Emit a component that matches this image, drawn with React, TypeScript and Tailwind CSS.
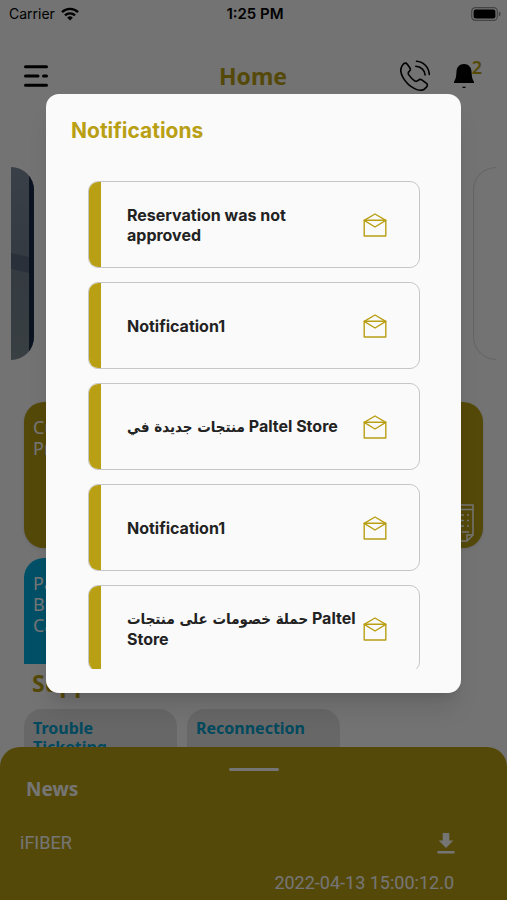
import React from 'react';

interface NotificationItem {
  id: number;
  title: string;
}

const NOTIFICATIONS: NotificationItem[] = [
  { id: 1, title: 'Reservation was not approved' },
  { id: 2, title: 'Notification1' },
  { id: 3, title: 'منتجات جديدة في Paltel Store' },
  { id: 4, title: 'Notification1' },
  { id: 5, title: 'حملة خصومات على منتجات Paltel Store' },
];

const SUPPORT_LINKS = ['Trouble Ticketing', 'Reconnection'];

const WifiIcon = () => (
  <svg viewBox="0 0 18 14" className="w-[18px] h-[14px]" fill="none" stroke="currentColor" strokeWidth="2.4">
    <path d="M1 5.2a11.4 11.4 0 0 1 16 0" />
    <path d="M4 8.4a7.1 7.1 0 0 1 10 0" />
    <path d="M9 13.6l-2.8-2.9a4 4 0 0 1 5.6 0z" fill="currentColor" stroke="none" />
  </svg>
);

const BatteryIcon = () => (
  <svg viewBox="0 0 30 14" className="w-[30px] h-[14px]">
    <rect x="0.7" y="0.7" width="25.6" height="12.6" rx="3.6" fill="none" stroke="#000" strokeOpacity="0.4" strokeWidth="1.2" />
    <rect x="2.6" y="2.6" width="21.8" height="8.8" rx="2" fill="#000" />
    <path d="M27.8 4.6c1.1.3 1.8 1.2 1.8 2.4s-.7 2.1-1.8 2.4z" fill="#000" fillOpacity="0.4" />
  </svg>
);

const MenuIcon = () => (
  <svg viewBox="0 0 24 24" className="size-6" stroke="currentColor" strokeWidth="3" strokeLinecap="round">
    <path d="M1.5 2.7h21M1.5 12h12.500M19.5 12h3M1.5 21.3h21" />
  </svg>
);

const PhoneIcon = () => (
  <svg viewBox="0 0 31 32" className="w-[31px] h-8" fill="none" stroke="currentColor" strokeWidth="1.600" strokeLinecap="round" strokeLinejoin="round">
    <path d="M3.200 4.200C4.600 2.700 6.200 2.800 7.300 4.200l2.500 3.500c.9 1.300.7 2.500-.4 3.500-1.500 1.300-1.700 2.100-.6 3.700 1.600 2.300 3.500 4.300 5.800 5.900 1.500 1.100 2.400.9 3.700-.5 1-1.100 2.200-1.300 3.500-.4l4.400 3.200c1.400 1 1.500 2.500.4 3.800-3.200 4.200-7.500 4-12 1.700C9.700 26.200 5.500 21.800 2.900 17.300.4 12.800-.1 7.700 3.200 4.200z" />
    <path d="M16.500 1.300c7 .4 12.300 5.900 12.800 13.200" />
    <path d="M15.800 6.300c5.100.3 8.900 3.800 9.300 8.600" />
  </svg>
);

const BellIcon = () => (
  <svg viewBox="0 0 22 26" className="w-[22px] h-[26px]" fill="currentColor">
    <path d="M11 1c-4.600 0-7.200 3.300-7.500 7.600-.3 5-.7 7.200-1.800 9-.4.700-.7 1.300-.9 2.400h20.400c-.2-1.100-.5-1.700-.9-2.400-1.100-1.800-1.500-4-1.800-9C18.200 4.300 15.600 1 11 1z" />
    <path d="M9 23.800h4c-.3.800-1 1.300-2 1.300s-1.700-.5-2-1.300z" />
  </svg>
);

const EnvelopeIcon = () => (
  <svg viewBox="0 0 24 24" className="size-6 shrink-0" fill="none" stroke="#b99f14" strokeWidth="1.4" strokeLinejoin="round">
    <path d="M1.200 7.300h21.600V23H1.200z" />
    <path d="M1.200 7.300L12 1l10.800 6.300L12 14z" />
  </svg>
);

const ReceiptIcon = () => (
  <svg viewBox="0 0 30 38" className="w-[30px] h-[38px]" fill="none" stroke="currentColor" strokeWidth="1.5">
    <path d="M1 1h28v30l-6 6H1z" />
    <path d="M1 5.500h28M23 37v-6h6M18 28h7" />
    <path d="M5 11h20M5 16.500h20M5 22h20" strokeDasharray="3 3" />
  </svg>
);

const DownloadIcon = () => (
  <svg viewBox="0 0 18 22" className="w-[18px] h-[22px]" fill="currentColor">
    <path d="M5.700 1h6.600v7.500h4L9 16 1.700 8.500h4z" />
    <path d="M.5 19h17v2.500H.5z" />
  </svg>
);

// Arabic runs get their own face, everything else stays in Inter
const MixedText: React.FC<{ text: string }> = ({ text }) => {
  const arabic = text.match(/^[\u0600-\u06ff\s]+(?=\s)/)?.[0] ?? '';
  return (
    <>
      {arabic && (
        <span lang="ar" className="text-[15px] font-['DejaVu_Sans_Condensed','DejaVu_Sans',sans-serif]">
          {arabic}
        </span>
      )}
      {text.slice(arabic.length)}
    </>
  );
};

const NotificationCard: React.FC<{ item: NotificationItem }> = ({ item }) => (
  <li>
    <button
      type="button"
      className="flex w-full h-[87px] items-center rounded-[10px] border border-[#c6c6c6] overflow-hidden text-left"
    >
      <span className="w-3 self-stretch bg-[#b99f14]"></span>
      <span dir="ltr" className="flex-1 pl-[26px] pr-0.5 text-base leading-5 font-bold text-[#222]">
        <MixedText text={item.title} />
      </span>
      <span className="w-14">
        <EnvelopeIcon />
      </span>
    </button>
  </li>
);

const App: React.FC = () => {
  return (
    <div className="relative h-screen min-h-[700px] w-full overflow-hidden bg-[#fafafa] font-['Noto_Sans',sans-serif]">
      {/* Status bar */}
      <div className="grid grid-cols-3 items-center h-7 pl-[9px] pr-[6px] font-['Inter',sans-serif] text-sm text-black">
        <div className="flex items-center gap-[6px]">
          <span>Carrier</span>
          <WifiIcon />
        </div>
        <span className="text-center text-[15px] font-semibold">1:25 PM</span>
        <div className="flex justify-end">
          <BatteryIcon />
        </div>
      </div>

      {/* App bar */}
      <header className="grid grid-cols-3 items-center mt-6 h-12 pl-6 pr-[25px] text-black">
        <button type="button" aria-label="Menu" className="justify-self-start">
          <MenuIcon />
        </button>
        <h1 className="text-center text-[23px] leading-8 font-bold text-[#b99f14]">Home</h1>
        <div className="flex items-center justify-end gap-[22px]">
          <button type="button" aria-label="Call">
            <PhoneIcon />
          </button>
          <button type="button" aria-label="Alerts" className="relative pr-[7px]">
            <BellIcon />
            <span className="absolute -top-2 right-0 text-lg leading-6 font-semibold text-[#b99f14]">2</span>
          </button>
        </div>
      </header>

      {/* Banner carousel, only the edges of the neighbours show */}
      <div className="flex justify-between mt-[67px] h-[193px] px-[11px]">
        <div className="flex w-[23px] rounded-r-[23px] overflow-hidden bg-linear-to-b from-[#7d8b9c] via-[#71808f] to-[#7c8a90]">
          <div className="flex-1 pt-[88px]">
            <div className="h-4 bg-[#5d6a7c] skew-y-12"></div>
          </div>
          <div className="w-[5px] bg-[#1b2c48]"></div>
        </div>
        <div className="w-[23px] rounded-l-[23px] border border-r-0 border-[#dcdcdc]"></div>
      </div>

      {/* Product cards */}
      <div className="mt-[42px] px-6">
        <div className="flex items-end justify-between h-[146px] rounded-[20px] bg-[#b99f14] px-[9px] pt-[15px] pb-[6px] text-lg leading-[21px] text-white shadow">
          <span className="self-start">
            Current
            <br />
            Products
          </span>
          <ReceiptIcon />
        </div>
        <div className="mt-[10px] w-1/2 h-[106px] rounded-t-[20px] bg-[#00aee0] px-[9px] pt-[15px] text-lg leading-[21px] text-white">
          Paltel
          <br />
          Broadband
          <br />
          Calculator
        </div>
      </div>

      {/* Support */}
      <h2 className="mt-[3px] pl-8 text-[23px] leading-8 font-bold text-[#b99f14]">Support</h2>
      <div className="flex gap-[10px] mt-[10px] px-6">
        {SUPPORT_LINKS.map((label) => (
          <a
            key={label}
            href="#support"
            className="w-1/3 h-20 rounded-[18px] bg-[#e0e0e0] px-[9px] pt-[10px] text-base leading-[19px] font-bold text-[#009fcd]"
          >
            {label}
          </a>
        ))}
      </div>

      {/* News sheet */}
      <section className="absolute inset-x-0 bottom-0 h-[153px] rounded-t-[20px] bg-[#b99f14] pt-[21px] font-['Roboto',sans-serif] text-white">
        <div className="mx-auto w-[50px] h-[3px] rounded-full bg-white"></div>
        <h2 className="mt-1 pl-[26px] text-[19px] leading-7 font-bold font-['Noto_Sans',sans-serif]">News</h2>
        <div className="flex items-center justify-between mt-7 pl-5 pr-[52px]">
          <span className="text-lg leading-6">iFIBER</span>
          <button type="button" aria-label="Download">
            <DownloadIcon />
          </button>
        </div>
        <p className="mt-4 pr-[53px] text-right text-lg leading-6">2022-04-13 15:00:12.0</p>
      </section>

      {/* Notifications dialog */}
      <div className="absolute inset-0 flex bg-black/54 px-[46px] pt-[94px] pb-[207px]">
        <div
          role="dialog"
          aria-labelledby="notifications-title"
          className="flex flex-1 flex-col rounded-[13px] bg-[#fafafa] pb-6 shadow-xl font-['Inter',sans-serif]"
        >
          <h2 id="notifications-title" className="pl-[25px] pt-[23px] text-[21px] leading-7 font-bold text-[#b99f14]">
            Notifications
          </h2>
          <ul className="flex flex-1 flex-col gap-[14px] mt-9 pl-[42px] pr-[41px] min-h-0 overflow-y-auto [scrollbar-width:none]">
            {NOTIFICATIONS.map((item) => (
              <NotificationCard key={item.id} item={item} />
            ))}
          </ul>
        </div>
      </div>
    </div>
  );
};

export default App;
